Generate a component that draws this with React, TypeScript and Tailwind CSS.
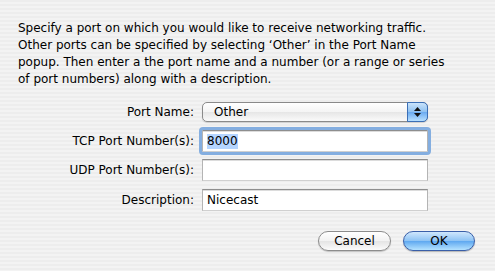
import React from 'react';

const font = { fontFamily: '"Lucida Grande", "DejaVu Sans", sans-serif' };

const PopupButton: React.FC<{ value: string }> = ({ value }) => (
  <div className="relative flex h-[20px] w-[226px] items-center rounded-[5px] border border-[#8a8a8a] bg-[linear-gradient(180deg,#ffffff_0%,#f4f4f4_50%,#e6e6e6_51%,#fafafa_100%)] shadow-[0_1px_1px_rgba(0,0,0,0.15)]">
    <span className="pl-[11px] text-[12px] text-black">{value}</span>
    {/* stepper */}
    <div className="absolute right-[-1px] top-[-1px] flex h-[20px] w-[21px] flex-col items-center justify-center gap-[2px] rounded-r-[5px] border border-[#3b6fb6] bg-[linear-gradient(180deg,#c9e3fb_0%,#8fc1f0_50%,#6aaaf0_51%,#b8e0ff_100%)]">
      <svg width="7" height="4" viewBox="0 0 7 4">
        <path d="M3.5 0 L7 4 L0 4 Z" fill="#111" />
      </svg>
      <svg width="7" height="4" viewBox="0 0 7 4">
        <path d="M0 0 L7 0 L3.5 4 Z" fill="#111" />
      </svg>
    </div>
  </div>
);

const TextField: React.FC<{ value?: string; focused?: boolean; selected?: boolean }> = ({ value, focused, selected }) => (
  <div
    className={
      'flex h-[22px] w-[226px] items-center border border-t-[#8e8e8e] border-x-[#b4b4b4] border-b-[#d0d0d0] bg-white pl-[4px] shadow-[inset_0_1px_0_#dcdcdc] ' +
      (focused ? 'outline outline-[3px] outline-[#84aee0] outline-offset-0 rounded-[1px]' : '')
    }
  >
    {value && (
      <span className={'text-[12px] leading-[15px] text-black ' + (selected ? 'bg-[#b5d5ff]' : '')}>{value}</span>
    )}
  </div>
);

export default function App() {
  return (
    <div
      style={font}
      className="h-[271px] w-[495px] overflow-hidden bg-[repeating-linear-gradient(180deg,#ededed_0px,#ededed_2px,#f3f3f3_2px,#f3f3f3_4px)] text-black"
    >
      <p className="pl-[18px] pt-[20px] text-[12px] leading-[17px]">
        Specify a port on which you would like to receive networking traffic.
        <br />
        Other ports can be specified by selecting ‘Other’ in the Port Name
        <br />
        popup. Then enter a the port name and a number (or a range or series
        <br />
        of port numbers) along with a description.
      </p>

      <div className="mt-[14px] grid grid-cols-[194px_226px] items-center gap-x-2 text-[12px]">
        <span className="text-right">Port Name:</span>
        <PopupButton value="Other" />

        <span className="mt-[8px] text-right">TCP Port Number(s):</span>
        <div className="mt-[8px]">
          <TextField value="8000" focused selected />
        </div>

        <span className="mt-[7px] text-right">UDP Port Number(s):</span>
        <div className="mt-[7px]">
          <TextField />
        </div>

        <span className="mt-[8px] text-right">Description:</span>
        <div className="mt-[8px]">
          <TextField value="Nicecast" />
        </div>
      </div>

      <div className="mt-[20px] flex justify-end gap-[12px] pr-[20px] text-[12px]">
        <button className="h-[20px] w-[73px] rounded-full border border-[#8c8c8c] bg-[linear-gradient(180deg,#ffffff_0%,#f2f2f2_50%,#e4e4e4_51%,#fbfbfb_100%)] shadow-[0_1px_1px_rgba(0,0,0,0.2)]">
          Cancel
        </button>
        <button className="h-[20px] w-[72px] rounded-full border border-[#3a5fa8] bg-[linear-gradient(180deg,#cfe7fd_0%,#8cc2f4_50%,#5ea8f0_51%,#b4e2ff_100%)] shadow-[0_1px_1px_rgba(0,0,0,0.25)]">
          OK
        </button>
      </div>
    </div>
  );
}
